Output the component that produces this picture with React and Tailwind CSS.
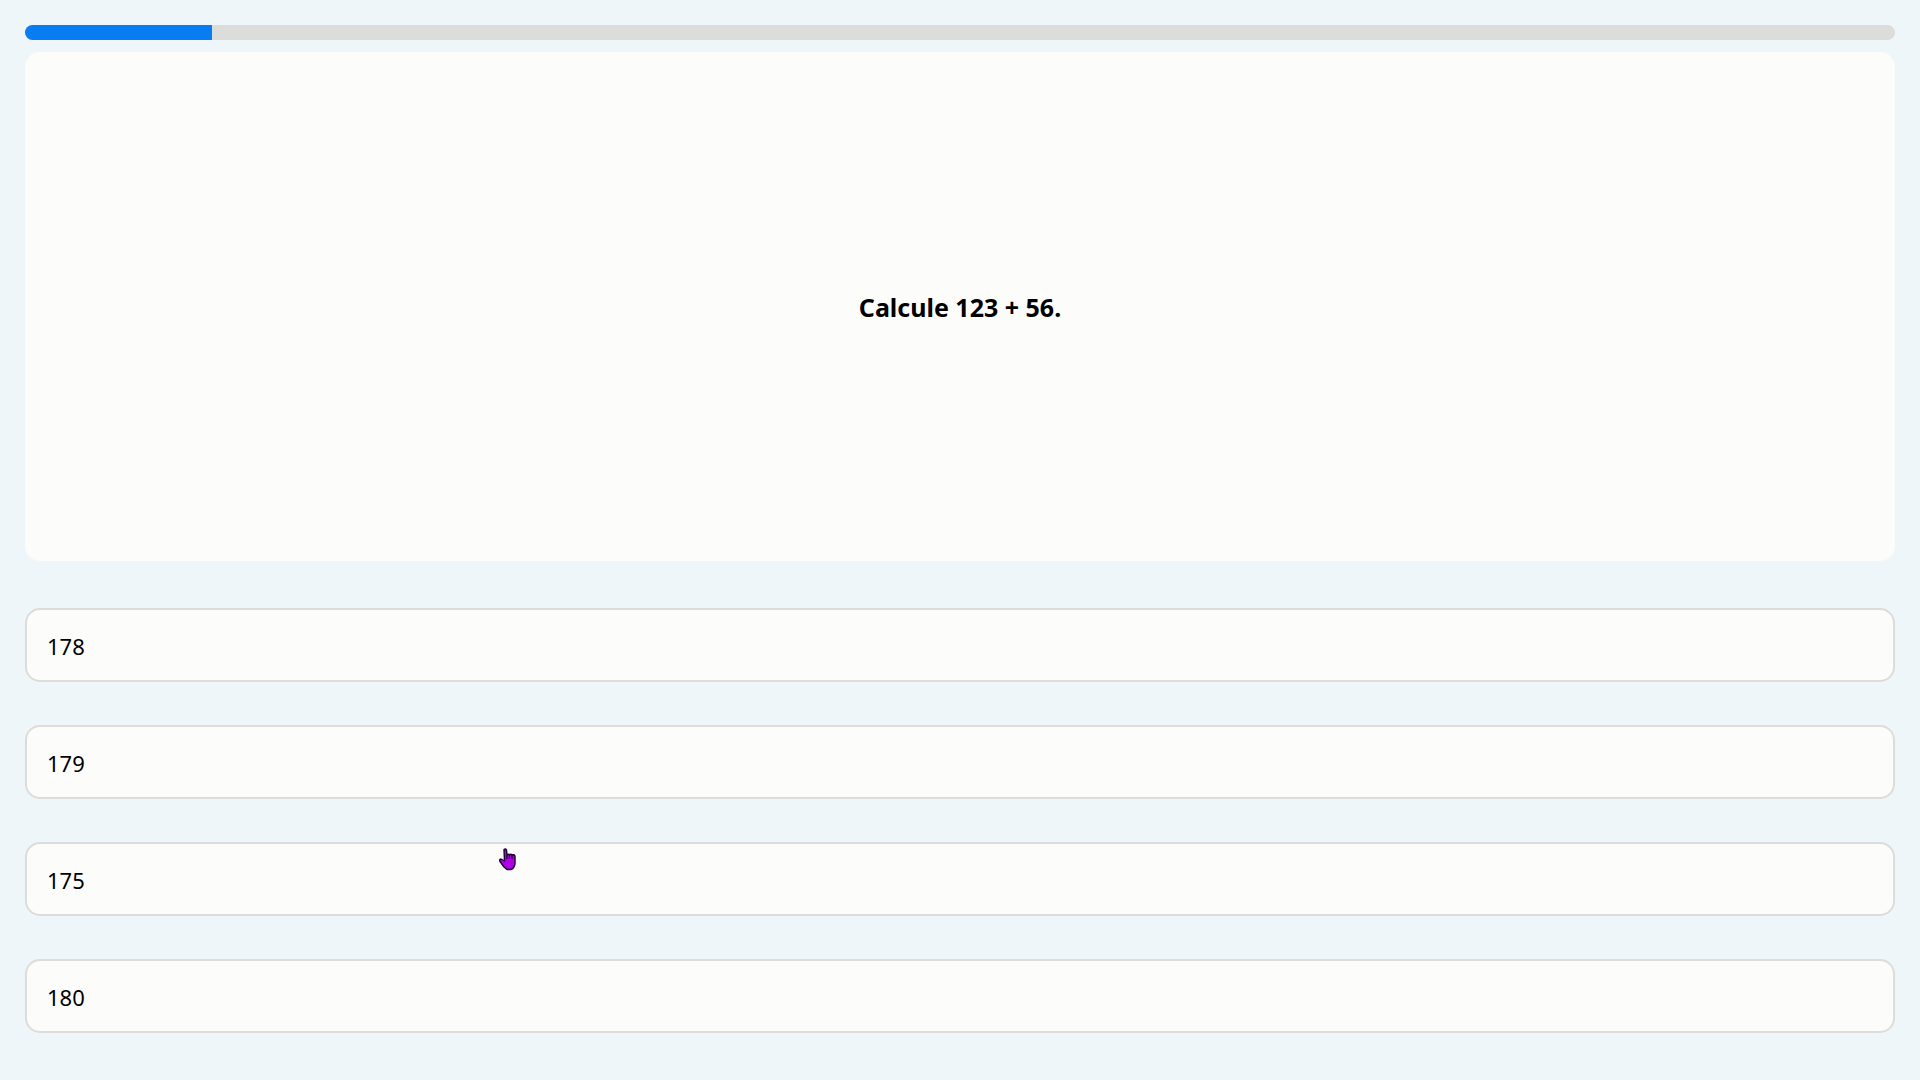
const options = ['178', '179', '175', '180'];

function Pointer() {
  return (
    <svg
      className="pointer-events-none absolute left-[25%] top-1.5 ml-1.5 h-6 w-5"
      viewBox="0 0 20 24"
      aria-hidden="true"
    >
      <path
        d="M5 1.5 Q6.5 0.5 7.5 2 L8 7 Q9.5 5.5 10.5 7 Q12 5.5 13 7 Q15 6 16 8 L16 16 Q15 20.5 12 21.5 H8 L5 19 L1 13.5 Q0 11.5 2 11 L5.5 13 Z"
        fill="#b000e6"
        stroke="#1c0030"
        strokeWidth="1.4"
        strokeLinejoin="round"
      />
      <path d="M8 7 V11 M10.5 7 V11 M13 7 V11" stroke="#1c0030" strokeWidth="1.2" />
    </svg>
  );
}

export default function App() {
  return (
    <main className="flex min-h-screen flex-col bg-[#eef6fa] p-[25px] font-['Noto_Sans',sans-serif] text-black">
      <div
        role="progressbar"
        aria-label="Progression"
        aria-valuenow={10}
        aria-valuemin={0}
        aria-valuemax={100}
        className="h-[15px] overflow-hidden rounded-full bg-[#dcdcda]"
      >
        <div className="h-full w-[10%] bg-[#087df2]" />
      </div>
      <section className="mt-3 flex h-[509px] items-center justify-center rounded-[15px] bg-[#fcfcfa]">
        <h1 className="pt-0.5 text-[25px] font-bold">Calcule 123 + 56.</h1>
      </section>
      <div className="mt-[47px] flex flex-col gap-[43px]">
        {options.map((value, i) => (
          <div key={value} className="relative">
            <button
              type="button"
              className="block h-[74px] w-full rounded-[15px] border-2 border-[#dcdcda] bg-[#fcfcfa] px-5 pt-0.5 text-left text-[22px]"
            >
              {value}
            </button>
            {i === 2 && <Pointer />}
          </div>
        ))}
      </div>
    </main>
  );
}
